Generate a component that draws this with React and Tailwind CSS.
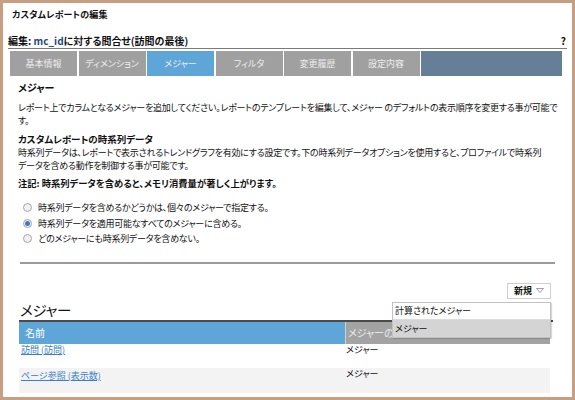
import React from 'react';

const tabs = ['基本情報', 'ディメンション', 'メジャー', 'フィルタ', '変更履歴', '設定内容'];

const radios = [
  { label: '時系列データを含めるかどうかは、個々のメジャーで指定する。', checked: false },
  { label: '時系列データを適用可能なすべてのメジャーに含める。', checked: true },
  { label: 'どのメジャーにも時系列データを含めない。', checked: false },
];

const rows = [
  { name: '訪問 (訪問)', type: 'メジャー' },
  { name: 'ページ参照 (表示数)', type: 'メジャー' },
];

const Radio = ({ checked }) => (
  <span className="w-[9px] h-[9px] rounded-full border border-[#a8a8a8] bg-[#f0f0f0] flex items-center justify-center">
    {checked && <span className="w-[5px] h-[5px] rounded-full bg-[#3b78c8]" />}
  </span>
);

export default function App() {
  return (
    <div
      className="w-[575px] h-[400px] border-[3px] border-[#c79e81] bg-white overflow-hidden relative text-[#111] [font-feature-settings:'palt'] text-[9px]"
      style={{ fontFamily: '"Noto Sans CJK JP", "Noto Sans", sans-serif' }}
    >
      <div className="pl-[9px] pt-[5px] leading-[14px] font-bold text-[9px] tracking-[0.2px]">カスタムレポートの編集</div>

      <div className="mt-[12px] ml-[5px] mr-[5px] h-[15px] leading-[14px] border-b border-[#7a7a7a] flex justify-between font-bold text-[10px]">
        <span>
          編集: <span className="text-[#1f4a7a] font-semibold">mc_id</span>に対する問合せ(訪問の最後)
        </span>
        <span className="pr-[1px]">?</span>
      </div>

      <div className="mt-[2px] ml-[7px] mr-[10px] h-[25px] flex">
        {tabs.map((t, i) => (
          <div
            key={t}
            className={`w-[67px] mr-[1.5px] flex items-center justify-center text-[9px] text-[#eeeeee] ${
              i === 2 ? 'bg-[#5fa6d8]' : 'bg-[#a0a0a0]'
            }`}
          >
            {t}
          </div>
        ))}
        <div className="flex-1 bg-[#667f99]" />
      </div>

      <div className="pl-[15px] pr-[12px]">
        <div className="mt-[5px] leading-[14px] font-bold text-[10px]">メジャー</div>

        <div className="mt-[6px] leading-[13px] whitespace-nowrap tracking-[-0.25px]">
          レポート上でカラムとなるメジャーを追加してください。レポートのテンプレートを編集して、メジャー のデフォルトの表示順序を変更する事が可能で
          <br />
          す。
        </div>

        <div className="mt-[6px] leading-[13px] font-bold text-[9.5px]">カスタムレポートの時系列データ</div>
        <div className="leading-[13px] whitespace-nowrap tracking-[-0.25px]">
          時系列データは、レポートで表示されるトレンドグラフを有効にする設定です。下の時系列データオプションを使用すると、プロファイルで時系列
          <br />
          データを含める動作を制御する事が可能です。
        </div>

        <div className="mt-[5px] leading-[13px] font-bold text-[9.3px]">注記: 時系列データを含めると、メモリ消費量が著しく上がります。</div>

        <div className="mt-[10px] pl-[5px] flex flex-col">
          {radios.map((r) => (
            <div key={r.label} className="h-[15.5px] flex items-center gap-[6px] tracking-[-0.25px]">
              <Radio checked={r.checked} />
              <span>{r.label}</span>
            </div>
          ))}
        </div>

        <div className="mt-[15px] ml-[2px] mr-[5px] h-[2px] bg-[#9a9a9a]" />

        <div className="mt-[19px] mr-[9px] flex justify-end">
          <div className="w-[44px] h-[16px] border border-[#cfcfcf] bg-white flex items-center justify-center gap-[4px] text-[9px] font-bold">
            新規
            <svg width="8" height="5" viewBox="0 0 8 5">
              <path d="M0.5 0.5 L7.5 0.5 L4 4.5 Z" fill="none" stroke="#888" strokeWidth="0.8" />
            </svg>
          </div>
        </div>

        <div className="mt-[1px] ml-[2px] text-[14.5px] leading-[20px] tracking-[-0.3px]">メジャー</div>

        <div className="ml-[1px] mr-[7px] border-t-2 border-[#4a4a4a]">
          <div className="flex h-[22px] items-center mr-[3px] text-[10px] text-white">
            <div className="w-[326px] h-full bg-[#5fa6d8] pl-[6px] flex items-center">名前</div>
            <div className="flex-1 h-full bg-[#a3a3a3] border-l border-[#d0d0d0] pl-[2px] flex items-center text-[#eeeeee]">
              メジャーの種類
            </div>
          </div>
          {rows.map((r, i) => (
            <div key={r.name} className={`flex h-[24.5px] mr-[3px] leading-[11px] ${i === 1 ? 'bg-[#f3f3f3]' : ''}`}>
              <div className={`w-[326px] pl-[2px] ${i === 1 ? 'pt-[2px]' : ''}`}>
                <a href="#" className="text-[#3b80c4] underline">{r.name}</a>
              </div>
              <div className="flex-1 pl-[1px]">{r.type}</div>
            </div>
          ))}
        </div>
      </div>

      <div className="absolute left-[389px] top-[299px] w-[159px] border border-[#c2c2c2] bg-white shadow-[1px_1px_1px_rgba(0,0,0,0.15)] text-[9px]">
        <div className="h-[17px] flex items-center pl-[2px] border-b border-[#dcdcdc]">計算されたメジャー</div>
        <div className="h-[17px] flex items-center pl-[2px] bg-[#d4d4d4]">メジャー</div>
      </div>
    </div>
  );
}
